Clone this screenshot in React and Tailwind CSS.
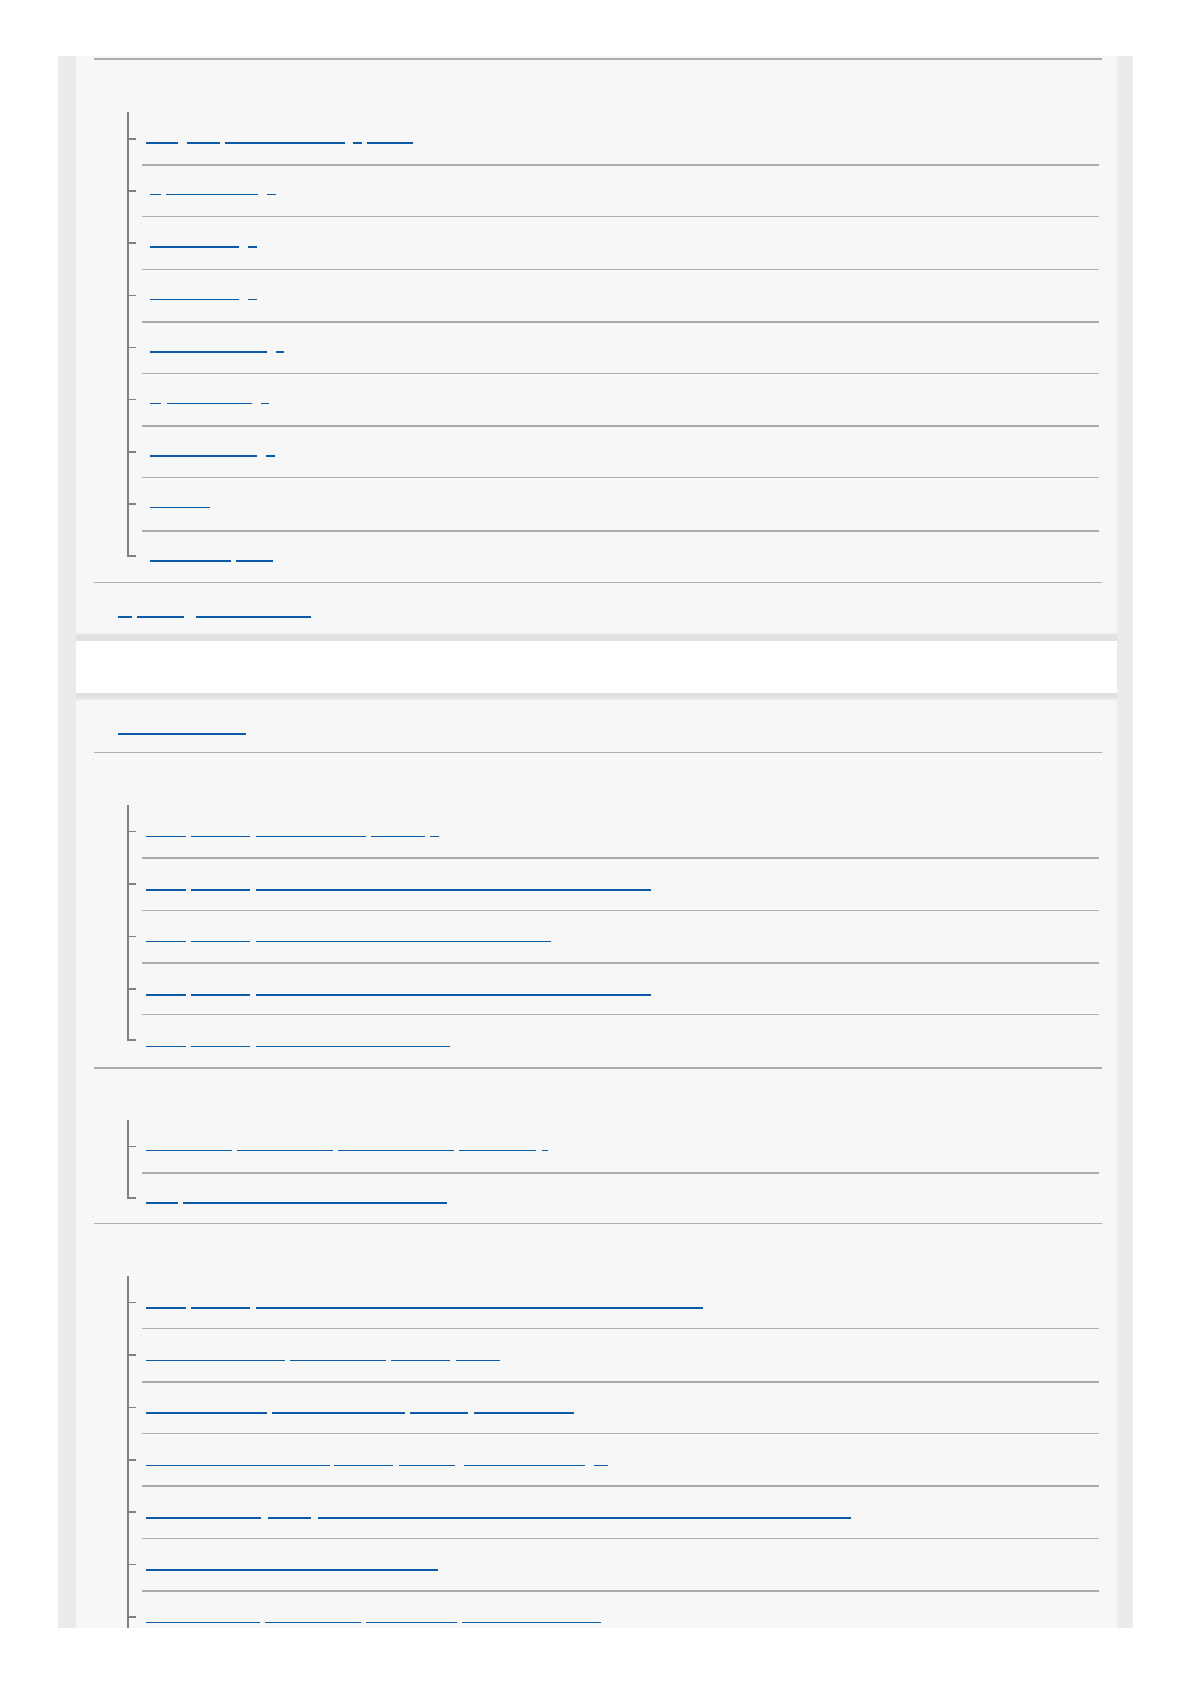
import React from 'react';

// Link underlines: [start, end] x positions on the page, thick = 2px line
const panelOneTree = [
  { sep: 0, thick: true, segs: [[146, 178], [187, 220], [225, 345], [353, 362], [367, 413]] },
  { sep: 2, thick: false, segs: [[150, 161], [166, 258], [267, 276]] },
  { sep: 1, thick: true, segs: [[150, 239], [248, 257]] },
  { sep: 1, thick: false, segs: [[150, 239], [248, 257]] },
  { sep: 2, thick: true, segs: [[150, 267], [276, 284]] },
  { sep: 1, thick: false, segs: [[150, 161], [167, 252], [261, 269]] },
  { sep: 2, thick: true, segs: [[150, 257], [266, 275]] },
  { sep: 1, thick: false, segs: [[150, 210]] },
  { sep: 2, thick: true, segs: [[150, 231], [236, 273]] },
];

const sectionTwoTree = [
  { sep: 0, thick: false, segs: [[146, 186], [191, 249.5], [256, 366], [371, 425], [430, 439]] },
  { sep: 2, thick: true, segs: [[146, 186], [191, 249.5], [256, 651]] },
  { sep: 1, thick: false, segs: [[146, 186], [191, 249.5], [256, 551]] },
  { sep: 2, thick: true, segs: [[146, 186], [191, 249.5], [256, 651]] },
  { sep: 1, thick: false, segs: [[146, 186], [191, 249.5], [256, 450]] },
];

const sectionThreeTree = [
  { sep: 0, thick: false, segs: [[146, 232], [237, 333], [338, 454], [459, 536], [542, 548]] },
  { sep: 2, thick: true, segs: [[146, 178], [183, 447]] },
];

const sectionFourTree = [
  { sep: 0, thick: true, segs: [[146, 186], [191, 249.5], [256, 703]] },
  { sep: 1, thick: false, segs: [[146, 285], [290, 386], [391, 450], [456, 499.5]] },
  { sep: 2, thick: true, segs: [[146, 267], [272, 405], [410, 468], [474, 574]] },
  { sep: 1, thick: false, segs: [[146, 329.5], [334, 392.6], [399, 454.6], [464, 584.6], [594, 608]] },
  { sep: 2, thick: true, segs: [[146, 261], [268, 311], [317.5, 851]] },
  { sep: 1, thick: true, segs: [[146, 438]] },
  { sep: 2, thick: false, segs: [[146, 260], [265, 361], [366, 457], [462, 601]] },
];

const LinkLine = ({ base, segs, thick }) => (
  <a href="#" className="flex">
    {segs.map(([a, b], i) => (
      <span
        key={i}
        className={`block shrink-0 bg-[#0d5aa7] ${thick ? 'h-[2px]' : 'h-px'}`}
        style={{ marginLeft: a - (i === 0 ? base : segs[i - 1][1]), width: b - a }}
      />
    ))}
  </a>
);

const TreeRow = ({ row, last, rowClass, ul }) => {
  const sepClass =
    row.sep === 2 ? 'border-t-2 border-[#aaaaaa]' : row.sep === 1 ? 'border-t border-[#b0b0b0]' : '';
  return (
    <div className={`flex ${rowClass}`}>
      <div className="w-[15px] shrink-0">
        {last ? (
          <div className="h-[27px] w-[9px] border-l-2 border-b-2 border-[#808080]" />
        ) : (
          <div className="h-full border-l-2 border-[#808080] pt-[26px]">
            <div className="w-[7px] h-[1.5px] bg-[#808080]" />
          </div>
        )}
      </div>
      <div className={`flex-1 ${sepClass}`} style={{ paddingTop: ul - row.sep }}>
        <LinkLine base={142} segs={row.segs} thick={row.thick} />
      </div>
    </div>
  );
};

const Tree = ({ rows, rowClass = 'h-[52.4px]', ul, open = false }) => (
  <ul className="ml-[51px] mr-[18px]">
    {rows.map((row, i) => (
      <li key={i}>
        <TreeRow row={row} last={!open && i === rows.length - 1} rowClass={rowClass} ul={ul} />
      </li>
    ))}
  </ul>
);

const App = () => {
  return (
    <div className="min-h-screen bg-white pt-[56px] pl-[58px]">
      <div className="w-[1075px] h-[1572px] overflow-hidden bg-[#ebebeb] pl-[18px] pr-[16px]">
        {/* First panel */}
        <div className="bg-[#f7f7f7] pt-[2px]">
          <div className="ml-[18px] mr-[15px] h-[54px] border-t-2 border-[#aaaaaa]" />
          <Tree rows={panelOneTree} rowClass="h-[52.2px]" ul={30} />
          <div className="ml-[18px] mr-[15px] h-[51.5px] border-t border-[#b0b0b0] pt-[33px]">
            <LinkLine base={94} segs={[[118, 132], [137, 184], [196, 311]]} thick />
          </div>
        </div>

        {/* Gap between panels */}
        <div className="h-[8px] bg-[#e1e1e1] border-t-2 border-[#e9e9e9]" />
        <div className="h-[52px] bg-white" />
        <div className="h-[7px] bg-[#e1e1e1] border-b-2 border-[#e9e9e9]" />

        {/* Second panel */}
        <div className="bg-[#f7f7f7] h-full">
          <div className="ml-[18px] mr-[15px] h-[52.3px] pt-[32.4px]">
            <LinkLine base={94} segs={[[118, 246]]} thick />
          </div>

          <div className="ml-[18px] mr-[15px] h-[52.4px] border-t border-[#b0b0b0]" />
          <Tree rows={sectionTwoTree} ul={31.5} />

          <div className="ml-[18px] mr-[15px] h-[53px] border-t-2 border-[#aaaaaa]" />
          <Tree rows={sectionThreeTree} rowClass="h-[51.8px]" ul={30.5} />

          <div className="ml-[18px] mr-[15px] h-[52.5px] border-t border-[#b0b0b0]" />
          <Tree rows={sectionFourTree} ul={31.5} open />
        </div>
      </div>
    </div>
  );
};

export default App;
